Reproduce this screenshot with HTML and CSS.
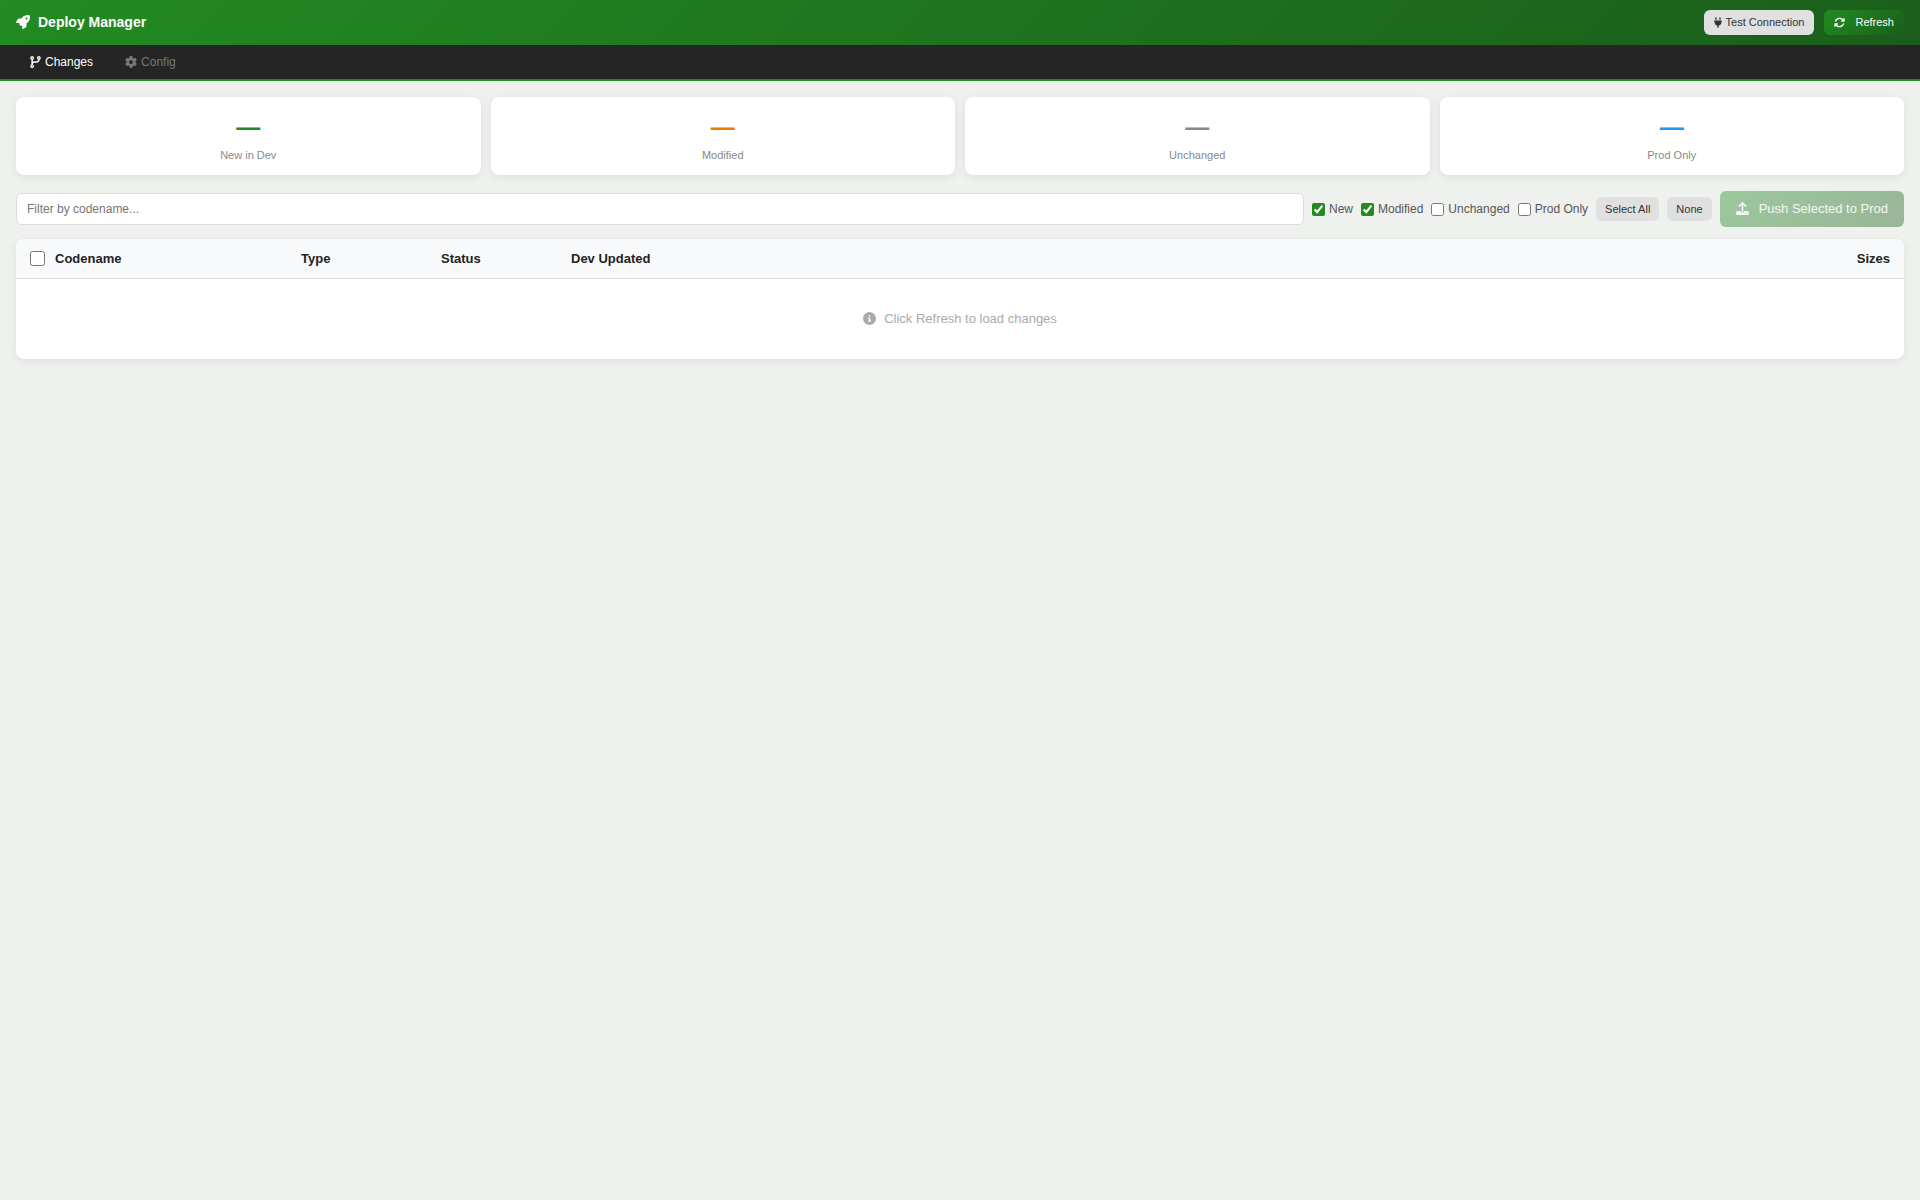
FILE: index.html
```html
<!DOCTYPE html>
<html lang="en">
<head>
    <meta charset="UTF-8">
    <meta name="viewport" content="width=device-width, initial-scale=1.0">
    <title>Deploy Manager</title>
    <link rel="stylesheet" href="styles.css">
</head>
<body>
    <header class="header">
        <h1 class="header-title">
            <svg class="icon" viewBox="0 0 512 512" aria-hidden="true"><path d="M156.600 384.900L125.700 354c-8.500-8.500-11.500-20.800-7.700-32.200c3-8.900 7-20.500 11.800-33.800L24 288c-8.600 0-16.600-4.600-20.900-12.100s-4.200-16.700 .2-24.100l52.500-88.500c13-21.900 36.500-35.300 61.900-35.300l82.300 0c2.400-4 4.800-7.700 7.200-11.300C289.100-4.100 411.100-8.100 483.900 5.300c11.600 2.100 20.600 11.200 22.800 22.800c13.400 72.900 9.300 194.800-111.400 276.700c-3.500 2.400-7.300 4.800-11.300 7.200v82.300c0 25.400-13.400 49-35.300 61.900l-88.500 52.500c-7.400 4.400-16.600 4.500-24.100 .2s-12.100-12.200-12.100-20.900V380.800c-14.100 4.900-26.400 8.900-35.700 11.900c-11.200 3.600-23.400 .5-31.800-7.800zM384 168a40 40 0 1 0 0-80 40 40 0 1 0 0 80z"/></svg>
            Deploy Manager
        </h1>
        <div class="header-actions">
            <button type="button" class="btn btn-secondary">
                <svg class="icon icon-plug" viewBox="0 0 384 512" aria-hidden="true"><path d="M96 0C78.300 0 64 14.300 64 32v96h64V32c0-17.700-14.300-32-32-32zM288 0c-17.700 0-32 14.300-32 32v96h64V32c0-17.700-14.300-32-32-32zM32 160c-17.700 0-32 14.300-32 32s14.300 32 32 32v32c0 77.400 55 142 128 156.800V480c0 17.700 14.300 32 32 32s32-14.300 32-32V412.800C297 398 352 333.400 352 256V224c17.700 0 32-14.300 32-32s-14.300-32-32-32H32z"/></svg>
                Test Connection
            </button>
            <button type="button" class="btn btn-primary">
                <svg class="icon" viewBox="0 0 512 512" aria-hidden="true"><path d="M105.100 202.600c7.700-21.800 20.200-42.300 37.800-59.800c62.500-62.500 163.800-62.500 226.300 0L386.300 160H352c-17.700 0-32 14.300-32 32s14.300 32 32 32H463.900c17.700 0 32-14.300 32-32V80c0-17.700-14.300-32-32-32s-32 14.300-32 32v35.200L414.400 97.600c-87.500-87.500-229.300-87.500-316.800 0C73.200 122 55.600 150.700 44.800 181.400c-5.900 16.700 2.900 34.900 19.500 40.800s34.900-2.900 40.800-19.500zM39 289.300c-5 1.500-9.800 4.200-13.700 8.200c-4 4-6.700 8.800-8.100 14c-.3 1.200-.6 2.500-.8 3.800c-.3 1.700-.4 3.400-.4 5.100V432c0 17.700 14.300 32 32 32s32-14.300 32-32V396.900l17.600 17.500c87.500 87.400 229.300 87.400 316.700 0c24.400-24.400 42.100-53.100 52.900-83.800c5.900-16.700-2.900-34.900-19.500-40.800s-34.900 2.900-40.800 19.500c-7.700 21.800-20.200 42.300-37.800 59.800c-62.500 62.500-163.800 62.500-226.300 0l-.1-.1L125.600 352H160c17.700 0 32-14.300 32-32s-14.300-32-32-32H48.400c-1.600 0-3.200 .1-4.800 .3s-3.100 .5-4.600 1z"/></svg>
                Refresh
            </button>
        </div>
    </header>

    <nav class="tabs">
        <a href="#changes" class="tab active">
            <svg class="icon icon-branch" viewBox="0 0 448 512" aria-hidden="true"><path d="M80 104a24 24 0 1 0 0-48 24 24 0 1 0 0 48zm80-24c0 32.800-19.700 61-48 73.300v87.800c18.800-10.900 40.700-17.100 64-17.100h96c35.300 0 64-28.700 64-64v-6.700C307.700 141 288 112.800 288 80c0-44.200 35.800-80 80-80s80 35.800 80 80c0 32.800-19.700 61-48 73.300V160c0 70.700-57.300 128-128 128H176c-35.300 0-64 28.700-64 64v6.700c28.300 12.300 48 40.500 48 73.300c0 44.200-35.800 80-80 80s-80-35.800-80-80c0-32.800 19.700-61 48-73.300V352 153.300C19.700 141 0 112.800 0 80C0 35.800 35.800 0 80 0s80 35.800 80 80zm232 0a24 24 0 1 0 -48 0 24 24 0 1 0 48 0zM80 456a24 24 0 1 0 0-48 24 24 0 1 0 0 48z"/></svg>
            Changes
        </a>
        <a href="#config" class="tab">
            <svg class="icon" viewBox="0 0 512 512" aria-hidden="true"><path d="M495.900 166.600c3.200 8.700 .5 18.400-6.400 24.600l-43.300 39.400c1.100 8.300 1.700 16.800 1.700 25.400s-.6 17.100-1.700 25.400l43.300 39.400c6.900 6.200 9.600 15.900 6.400 24.600c-4.400 11.900-9.700 23.300-15.800 34.300l-4.700 8.100c-6.600 11-14 21.400-22.100 31.200c-5.900 7.200-15.700 9.600-24.500 6.800l-55.700-17.700c-13.400 10.300-28.200 18.900-44 25.400l-12.500 57.100c-2 9.100-9 16.300-18.200 17.800c-13.800 2.300-28 3.500-42.500 3.500s-28.700-1.200-42.500-3.500c-9.200-1.500-16.200-8.700-18.200-17.800l-12.500-57.100c-15.800-6.500-30.600-15.100-44-25.400L83.100 425.900c-8.800 2.800-18.600 .3-24.500-6.800c-8.100-9.800-15.500-20.200-22.100-31.200l-4.700-8.100c-6.100-11-11.400-22.400-15.800-34.300c-3.200-8.700-.5-18.400 6.400-24.600l43.300-39.400C64.600 273.100 64 264.600 64 256s.6-17.100 1.700-25.400L22.400 191.200c-6.900-6.200-9.600-15.900-6.400-24.600c4.400-11.900 9.700-23.300 15.800-34.300l4.700-8.100c6.600-11 14-21.400 22.100-31.200c5.900-7.200 15.700-9.600 24.500-6.800l55.700 17.700c13.400-10.300 28.200-18.900 44-25.400l12.500-57.100c2-9.100 9-16.300 18.200-17.800C227.300 1.200 241.500 0 256 0s28.700 1.200 42.500 3.500c9.200 1.500 16.200 8.700 18.200 17.800l12.500 57.100c15.800 6.500 30.600 15.100 44 25.400l55.700-17.700c8.800-2.800 18.600-.3 24.500 6.800c8.100 9.800 15.500 20.200 22.100 31.200l4.700 8.100c6.100 11 11.400 22.400 15.800 34.300zM256 336a80 80 0 1 0 0-160 80 80 0 1 0 0 160z"/></svg>
            Config
        </a>
    </nav>

    <main class="content">
        <div class="stats">
            <div class="stat-card">
                <div class="stat-value stat-new">—</div>
                <div class="stat-label">New in Dev</div>
            </div>
            <div class="stat-card">
                <div class="stat-value stat-modified">—</div>
                <div class="stat-label">Modified</div>
            </div>
            <div class="stat-card">
                <div class="stat-value stat-unchanged">—</div>
                <div class="stat-label">Unchanged</div>
            </div>
            <div class="stat-card">
                <div class="stat-value stat-prod">—</div>
                <div class="stat-label">Prod Only</div>
            </div>
        </div>

        <div class="toolbar">
            <input type="text" class="filter-input" placeholder="Filter by codename..." aria-label="Filter by codename">
            <label class="filter-check"><input type="checkbox" checked>New</label>
            <label class="filter-check"><input type="checkbox" checked>Modified</label>
            <label class="filter-check"><input type="checkbox">Unchanged</label>
            <label class="filter-check"><input type="checkbox">Prod Only</label>
            <button type="button" class="btn btn-small">Select All</button>
            <button type="button" class="btn btn-small">None</button>
            <button type="button" class="btn btn-primary btn-push" disabled>
                <svg class="icon" viewBox="0 0 512 512" aria-hidden="true"><path d="M288 109.300V352c0 17.700-14.300 32-32 32s-32-14.300-32-32V109.300l-73.400 73.400c-12.500 12.500-32.800 12.500-45.300 0s-12.500-32.800 0-45.300l128-128c12.500-12.500 32.800-12.500 45.300 0l128 128c12.500 12.500 12.500 32.800 0 45.300s-32.800 12.500-45.300 0L288 109.300zM64 352H192c0 35.300 28.700 64 64 64s64-28.700 64-64H448c35.300 0 64 28.700 64 64v32c0 35.300-28.700 64-64 64H64c-35.300 0-64-28.700-64-64V416c0-35.300 28.700-64 64-64zM432 456a24 24 0 1 0 0-48 24 24 0 1 0 0 48z"/></svg>
                Push Selected to Prod
            </button>
        </div>

        <div class="table-card">
            <table class="changes-table">
                <thead>
                    <tr>
                        <th class="col-check"><input type="checkbox" aria-label="Select all rows"></th>
                        <th class="col-name">Codename</th>
                        <th class="col-type">Type</th>
                        <th class="col-status">Status</th>
                        <th>Dev Updated</th>
                        <th class="col-sizes">Sizes</th>
                    </tr>
                </thead>
                <tbody>
                    <tr>
                        <td colspan="6">
                            <div class="empty">
                                <svg class="icon" viewBox="0 0 512 512" aria-hidden="true"><path d="M256 512A256 256 0 1 0 256 0a256 256 0 1 0 0 512zM216 336h24V272H216c-13.300 0-24-10.700-24-24s10.700-24 24-24h48c13.300 0 24 10.700 24 24v88h8c13.300 0 24 10.700 24 24s-10.700 24-24 24H216c-13.300 0-24-10.700-24-24s10.700-24 24-24zm40-208a32 32 0 1 1 0 64 32 32 0 1 1 0-64z"/></svg>
                                Click Refresh to load changes
                            </div>
                        </td>
                    </tr>
                </tbody>
            </table>
        </div>
    </main>
</body>
</html>
```
FILE: styles.css
```css
:root {
    --green: #228b22;
    --green-dark: #1b5e1b;
    --page-bg: #eff1ee;
    --nav-bg: #252525;
    --border: #ddd;
    --button-gray: #e0e0e0;
    --card-shadow: 0 2px 8px rgba(0, 0, 0, 0.08);
}

* {
    box-sizing: border-box;
}

body {
    margin: 0;
    font-family: "Liberation Sans", Arial, sans-serif;
    font-size: 13px;
    color: #222;
    background: var(--page-bg);
}

button, input {
    font-family: inherit;
}

.icon {
    width: 1em;
    height: 1em;
    flex: none;
    margin-bottom: 1px;
    fill: currentColor;
}

.header {
    display: flex;
    align-items: center;
    justify-content: space-between;
    padding: 10px 16px;
    background: linear-gradient(135deg, var(--green), var(--green-dark));
    color: #fff;
}

.header-title {
    display: flex;
    align-items: center;
    gap: 8px;
    margin: 0;
    font-size: 14px;
    font-weight: bold;
    line-height: 17px;
}

.header-actions {
    display: flex;
    gap: 10px;
}

.btn {
    display: flex;
    align-items: center;
    border: none;
    border-radius: 6px;
    font-size: 11px;
    line-height: 13px;
    white-space: nowrap;
    cursor: pointer;
}

.btn-secondary {
    gap: 4px;
    padding: 6px 10px;
    background: var(--button-gray);
    color: #333;
}

.icon-plug {
    width: 8px;
}

.btn-primary {
    gap: 10px;
    padding: 6px 10px;
    background: linear-gradient(135deg, var(--green), var(--green-dark));
    color: #fff;
}

.btn-small {
    padding: 5px 9px;
    line-height: 14px;
    background: var(--button-gray);
    color: #333;
}

.btn-push {
    padding: 10px 16px;
    font-size: 13px;
    line-height: 16px;
}

.btn-push:disabled {
    opacity: 0.4;
    cursor: not-allowed;
}

.tabs {
    display: flex;
    gap: 4px;
    padding: 0 16px;
    background: var(--nav-bg);
    border-bottom: 2px solid var(--green);
}

.tab {
    display: flex;
    align-items: center;
    gap: 4px;
    padding: 10px 14px;
    font-size: 12px;
    line-height: 14px;
    color: #777;
    text-decoration: none;
}

.tab.active {
    color: #fff;
}

.icon-branch {
    width: 11px;
}

.content {
    padding: 16px;
}

.stats {
    display: grid;
    grid-template-columns: repeat(4, 1fr);
    gap: 10px;
    margin-bottom: 16px;
}

.stat-card {
    padding: 12px;
    background: #fff;
    border-radius: 8px;
    box-shadow: var(--card-shadow);
    text-align: center;
}

.stat-value {
    margin-bottom: 4px;
    font-size: 24px;
    font-weight: bold;
    line-height: 35px;
}

.stat-new { color: #228b22; }
.stat-modified { color: #e67e00; }
.stat-unchanged { color: #888; }
.stat-prod { color: #2196f3; }

.stat-label {
    font-size: 11px;
    line-height: 15px;
    color: #888;
}

.toolbar {
    display: flex;
    align-items: center;
    gap: 8px;
    margin-bottom: 12px;
}

.filter-input {
    flex: 1;
    min-width: 0;
    height: 32px;
    padding: 0 10px;
    border: 1px solid var(--border);
    border-radius: 6px;
    background: #fff;
    font-size: 12px;
}

.filter-check {
    display: flex;
    align-items: center;
    gap: 4px;
    font-size: 12px;
    color: #555;
    white-space: nowrap;
}

.filter-check input {
    width: 13px;
    height: 13px;
    margin: 0;
    accent-color: var(--green);
}

.table-card {
    background: #fff;
    border-radius: 8px;
    box-shadow: var(--card-shadow);
    overflow: hidden;
}

.changes-table {
    width: 100%;
    table-layout: fixed;
    border-collapse: separate;
    border-spacing: 0;
}

.changes-table th {
    height: 40px;
    padding: 0 10px;
    background: #f8f9fb;
    border-bottom: 1px solid var(--border);
    text-align: left;
}

.changes-table .col-check {
    width: 29px;
    padding: 0 0 0 14px;
}

.col-check input {
    display: block;
    width: 15px;
    height: 15px;
    margin: 0;
    accent-color: var(--green);
}

.col-name { width: 246px; }
.col-type { width: 140px; }
.col-status { width: 130px; }

.changes-table .col-sizes {
    padding-right: 14px;
    text-align: right;
}

.changes-table td {
    padding: 0;
}

.empty {
    display: flex;
    align-items: center;
    justify-content: center;
    gap: 8px;
    padding: 32px 16px;
    line-height: 16px;
    color: #aaa;
}
```
